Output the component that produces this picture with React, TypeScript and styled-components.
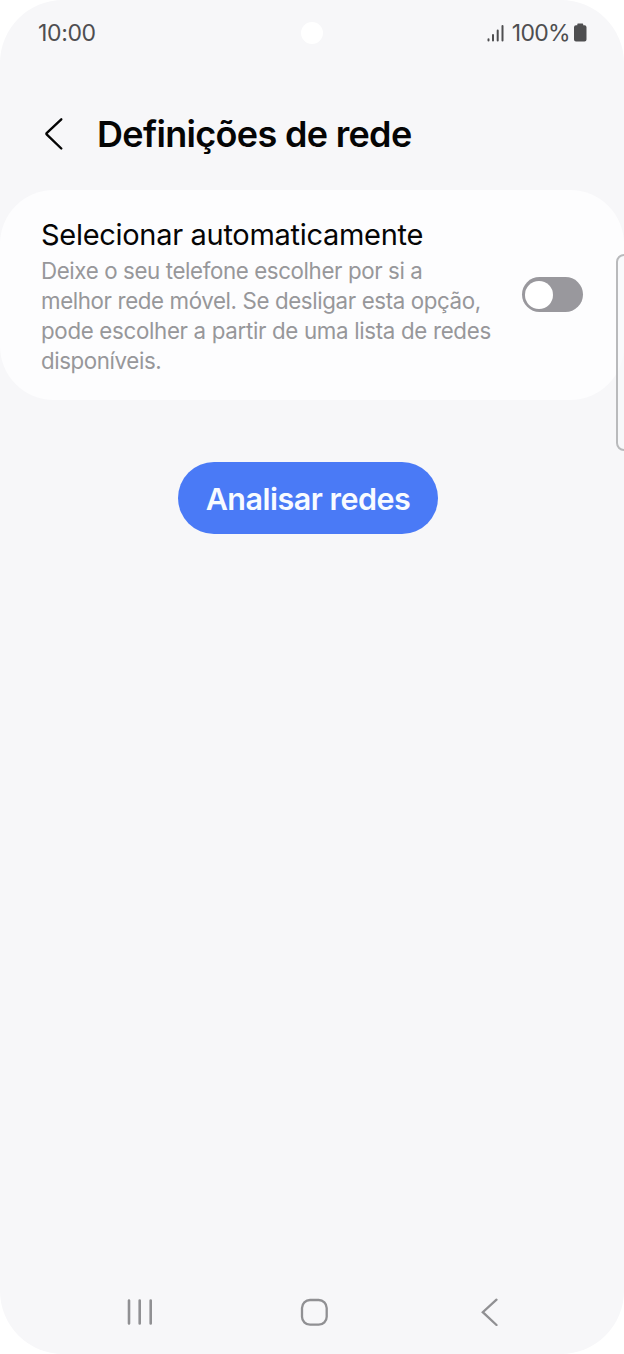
import React from "react";
import styled, { createGlobalStyle } from "styled-components";

const GlobalStyle = createGlobalStyle`
  *, *::before, *::after { box-sizing: border-box; }
  body { margin: 0; background: #ffffff; }
  button { font: inherit; border: 0; padding: 0; background: none; cursor: pointer; }
  h1, h2, p { margin: 0; font-weight: 400; }
  svg { display: block; }
`;

const Screen = styled.main`
  position: relative;
  display: flex;
  flex-direction: column;
  width: 624px;
  height: 1354px;
  overflow: hidden;
  border-radius: 63px;
  background: #f7f7f9;
  font-family: Inter, "Noto Sans", sans-serif;
  color: #050505;
`;

const StatusBar = styled.header`
  display: grid;
  grid-template-columns: 1fr 22px 1fr;
  align-items: center;
  height: 66px;
  padding: 0 37px;
  color: #4e4e50;
  font-size: 23px;
  line-height: 28px;
`;

const Clock = styled.time`
  padding-left: 1px;
  letter-spacing: -0.35px;
`;

const Camera = styled.span`
  width: 22px;
  height: 22px;
  border-radius: 50%;
  background: #ffffff;
`;

const StatusIcons = styled.div`
  display: flex;
  align-items: center;
  justify-content: flex-end;
`;

const BatteryLevel = styled.span`
  margin: 0 3px 0 7px;
  letter-spacing: -0.7px;
`;

const TitleBar = styled.div`
  display: flex;
  align-items: center;
  height: 124px;
  padding: 12px 0 0 44px;
`;

const BackButton = styled.button`
  width: 53px;
`;

const Title = styled.h1`
  font-size: 36px;
  font-weight: 600;
  line-height: 44px;
  letter-spacing: -0.68px;
`;

const Card = styled.section`
  display: flex;
  align-items: center;
  justify-content: space-between;
  height: 210px;
  padding: 0 41px;
  border-radius: 54px;
  background: #fdfdfe;
`;

const CardText = styled.div`
  padding-top: 2px;
`;

const CardTitle = styled.h2`
  font-size: 29px;
  line-height: 36px;
  letter-spacing: -0.3px;
  white-space: nowrap;
`;

const Description = styled.p`
  margin-top: 3px;
  color: #97979a;
  font-size: 22.3px;
  line-height: 30px;
`;

const DescriptionLine = styled.span<{ $tracking: number }>`
  display: block;
  letter-spacing: ${({ $tracking }) => $tracking}px;
  white-space: nowrap;
`;

const Switch = styled.button`
  display: flex;
  align-items: center;
  flex: none;
  width: 61px;
  height: 35px;
  margin-bottom: 1px;
  padding-left: 3px;
  border-radius: 18px;
  background: #99989d;
`;

const Knob = styled.span`
  width: 28px;
  height: 28px;
  border-radius: 50%;
  background: #ffffff;
`;

const EdgeHandle = styled.div`
  position: absolute;
  top: 254px;
  right: -8px;
  width: 16px;
  height: 197px;
  border: 2px solid #b9babc;
  border-radius: 8px;
  background: rgba(248, 249, 250, 0.65);
`;

const ScanButton = styled.button`
  && {
    align-self: flex-start;
    width: 260px;
    height: 72px;
    margin: 62px 0 0 178px;
    padding-top: 2px;
    border-radius: 36px;
    background: #4a7af6;
    color: #f8fbff;
    font-size: 30.5px;
    font-weight: 600;
    line-height: 38px;
    letter-spacing: -0.5px;
  }
`;

const NavBar = styled.nav`
  display: flex;
  align-items: center;
  gap: 146px;
  height: 84px;
  margin-top: auto;
  padding-left: 126px;
  color: #909093;
`;

const NavButton = styled.button`
  color: inherit;

  &:last-child {
    margin-left: 6px;
  }
`;

const SignalIcon = () => (
  <svg width="18" height="20" viewBox="0 0 18 20" fill="none" stroke="currentColor" strokeWidth="2" strokeLinecap="round">
    <path d="M1.5 16.2v1.2M6 12v5.4M10.7 7.5v9.9M15.5 3v14.4" />
  </svg>
);

const BatteryIcon = () => (
  <svg width="14" height="20" viewBox="0 0 14 20" fill="currentColor">
    <path d="M5 .5h4.5a.7.7 0 0 1 .7.7V2.3h1.3a2 2 0 0 1 2 2V16.5a2 2 0 0 1-2 2H3a2 2 0 0 1-2-2V4.3a2 2 0 0 1 2-2h1.3V1.2a.7.7 0 0 1 .7-.7z" />
  </svg>
);

export default function App() {
  return (
    <>
      <GlobalStyle />
      <Screen>
        <StatusBar>
          <Clock>10:00</Clock>
          <Camera />
          <StatusIcons>
            <SignalIcon />
            <BatteryLevel>100%</BatteryLevel>
            <BatteryIcon />
          </StatusIcons>
        </StatusBar>
        <TitleBar>
          <BackButton aria-label="Voltar">
            <svg width="20" height="34" viewBox="0 0 20 34" fill="none" stroke="#050505" strokeWidth="2.4" strokeLinecap="round" strokeLinejoin="round">
              <path d="M17.3 2.3 2.9 15.8q-1 .9 0 1.8L17.3 31.5" />
            </svg>
          </BackButton>
          <Title>Definições de rede</Title>
        </TitleBar>
        <Card>
          <CardText>
            <CardTitle>Selecionar automaticamente</CardTitle>
            <Description>
              <DescriptionLine $tracking={-0.38}>Deixe o seu telefone escolher por si a</DescriptionLine>
              <DescriptionLine $tracking={-0.38}>melhor rede móvel. Se desligar esta opção,</DescriptionLine>
              <DescriptionLine $tracking={-0.32}>pode escolher a partir de uma lista de redes</DescriptionLine>
              <DescriptionLine $tracking={-0.4}>disponíveis.</DescriptionLine>
            </Description>
          </CardText>
          <Switch role="switch" aria-checked="false" aria-label="Selecionar automaticamente">
            <Knob />
          </Switch>
        </Card>
        <ScanButton>Analisar redes</ScanButton>
        <NavBar>
          <NavButton aria-label="Recentes">
            <svg width="28" height="28" viewBox="0 0 28 28" stroke="currentColor" strokeWidth="2.6" strokeLinecap="round">
              <path d="M3 2.5v23M13.7 2.5v23M24.7 2.5v23" />
            </svg>
          </NavButton>
          <NavButton aria-label="Início">
            <svg width="28" height="28" viewBox="0 0 28 28" fill="none" stroke="currentColor" strokeWidth="2.3">
              <rect x="2" y="2" width="24.7" height="24.7" rx="8" />
            </svg>
          </NavButton>
          <NavButton aria-label="Voltar">
            <svg width="18" height="28" viewBox="0 0 18 28" fill="none" stroke="currentColor" strokeWidth="2.3" strokeLinecap="round">
              <path d="M16.5 1.7 2.8 14.2 16.5 27" />
            </svg>
          </NavButton>
        </NavBar>
        <EdgeHandle />
      </Screen>
    </>
  );
}
